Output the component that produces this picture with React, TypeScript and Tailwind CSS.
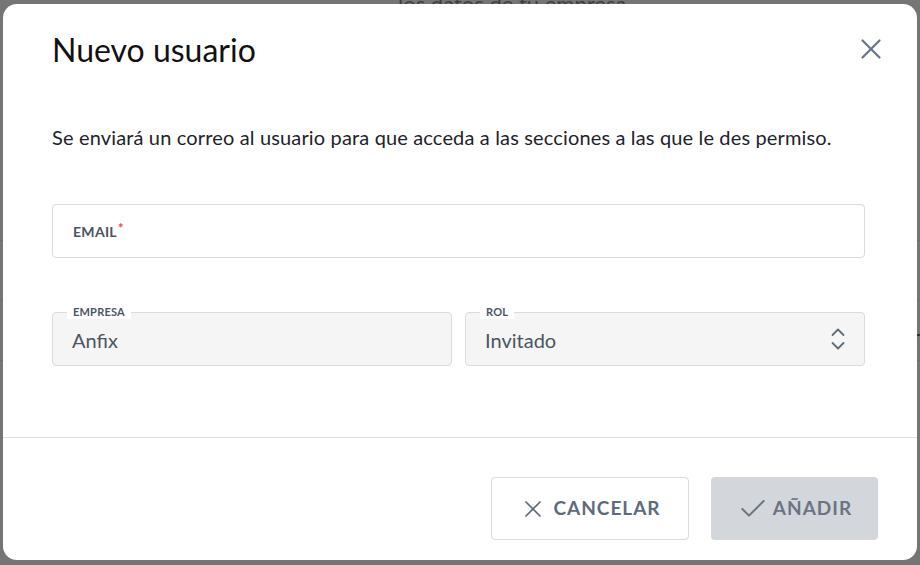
import { X, Check } from "lucide-react";

function Backdrop() {
  return (
    <div className="absolute inset-0 bg-[#757575]">
      <div className="absolute left-[398px] top-[-13px] text-[22px] text-[#3f3f3f]">los datos de tu empresa</div>
      <div className="absolute left-[0px] top-[240px] h-[1px] w-full bg-[#6c6c6c]" />
      <div className="absolute left-[0px] top-[300px] h-[1px] w-full bg-[#6c6c6c]" />
      <div className="absolute left-[0px] top-[360px] h-[1px] w-full bg-[#6c6c6c]" />
      <div className="absolute right-[0px] top-[323px] text-[18px] text-[#222]">r</div>
    </div>
  );
}

function UpDown() {
  return (
    <svg width="14" height="22" viewBox="0 0 14 22" fill="none" stroke="currentColor" strokeWidth="1.8" strokeLinecap="round" strokeLinejoin="round">
      <polyline points="1.5,7 7,1.5 12.5,7" />
      <polyline points="1.5,15 7,20.5 12.5,15" />
    </svg>
  );
}

export default function App() {
  return (
    <div
      className="relative h-[565px] w-[920px] overflow-hidden"
      style={{ fontFamily: "Lato, 'Noto Sans', sans-serif" }}
    >
      <Backdrop />
      <div className="absolute left-[3px] top-[4px] flex h-[556px] w-[914px] flex-col rounded-[14px] bg-white">
        <div className="flex items-start justify-between pl-[49px] pr-[29px] pt-[26px]">
          <h1 className="text-[32px] leading-[40px] text-[#111]">Nuevo usuario</h1>
          <button className="mt-[2px] text-[#66788a]">
            <X size={34} strokeWidth={1.6} />
          </button>
        </div>

        <div className="px-[49px] pt-[54px]">
          <p className="whitespace-nowrap text-[20px] leading-[26px] tracking-[0.15px] text-[#1e232b]">
            Se enviará un correo al usuario para que acceda a las secciones a las que le des permiso.
          </p>

          <div className="mt-[54px] flex h-[54px] w-[813px] items-center rounded-[4px] border border-[#d8dbe0] px-[20px]">
            <span className="text-[14px] font-bold tracking-[0.3px] text-[#4c5562]">EMAIL</span>
            <span className="ml-[1px] -mt-[4px] text-[13px] font-bold text-[#ef4444]">*</span>
          </div>

          <div className="mt-[54px] flex w-[813px] gap-[13px]">
            <div className="relative flex h-[54px] flex-1 items-center rounded-[4px] border border-[#d8dbe0] bg-[#f5f5f5] px-[19px]">
              <span className="absolute left-[14px] top-[-8px] bg-white px-[6px] text-[11px] font-bold leading-[14px] tracking-[0.2px] text-[#4c5562]">
                EMPRESA
              </span>
              <span className="pt-[2px] text-[20px] text-[#4c5562]">Anfix</span>
            </div>
            <div className="relative flex h-[54px] flex-1 items-center justify-between rounded-[4px] border border-[#d8dbe0] bg-[#f5f5f5] pl-[19px] pr-[19px]">
              <span className="absolute left-[14px] top-[-8px] bg-white px-[6px] text-[11px] font-bold leading-[14px] tracking-[0.2px] text-[#4c5562]">
                ROL
              </span>
              <span className="pt-[2px] text-[20px] text-[#4c5562]">Invitado</span>
              <span className="text-[#5f6b7a]">
                <UpDown />
              </span>
            </div>
          </div>
        </div>

        <div className="mt-[71px] h-[1px] w-full bg-[#dcdde2]" />

        <div className="flex justify-end gap-[22px] pr-[39px] pt-[39px]">
          <button className="flex h-[63px] w-[198px] items-center justify-center gap-[6px] rounded-[4px] border border-[#d8dbe0] bg-white text-[19px] font-bold tracking-[1px] text-[#5f6b7a]">
            <X size={28} strokeWidth={1.5} />
            CANCELAR
          </button>
          <button className="flex h-[63px] w-[167px] items-center justify-center gap-[4px] rounded-[4px] bg-[#d3d7dc] text-[19px] font-bold tracking-[1px] text-[#6b7582]">
            <Check size={32} strokeWidth={1.5} />
            AÑADIR
          </button>
        </div>
      </div>
    </div>
  );
}
